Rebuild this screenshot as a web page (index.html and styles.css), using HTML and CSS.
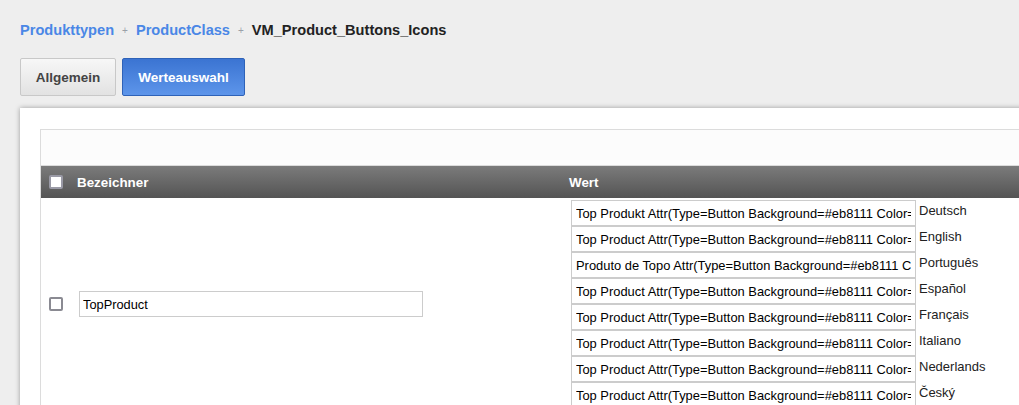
FILE: index.html
```html
<!DOCTYPE html>
<html>
<head>
<meta charset="utf-8">
<link rel="stylesheet" href="styles.css">
</head>
<body>
<div class="page">
  <nav class="crumbs">
    <a class="crumb-link">Produkttypen</a>
    <span class="sep">+</span>
    <a class="crumb-link">ProductClass</a>
    <span class="sep">+</span>
    <span class="crumb-current">VM_Product_Buttons_Icons</span>
  </nav>
  <div class="tabs">
    <button class="tab">Allgemein</button>
    <button class="tab tab-active">Werteauswahl</button>
  </div>
  <div class="panel">
    <div class="grid-box">
      <div class="toolbar"></div>
      <div class="head">
        <div class="hcell hcell-name"><span class="cb cb-head"></span><span>Bezeichner</span></div>
        <div class="hcell hcell-value">Wert</div>
      </div>
      <div class="row">
        <div class="cell-name"><span class="cb"></span><input class="name-input" type="text" value="TopProduct"></div>
        <div class="cell-value">
          <div class="lang-row"><input class="val-input" type="text" value="Top Produkt Attr(Type=Button Background=#eb8111 Color=#ffffff)"><span class="lang">Deutsch</span></div>
          <div class="lang-row"><input class="val-input" type="text" value="Top Product Attr(Type=Button Background=#eb8111 Color=#ffffff)"><span class="lang">English</span></div>
          <div class="lang-row"><input class="val-input" type="text" value="Produto de Topo Attr(Type=Button Background=#eb8111 Color=#ffffff)"><span class="lang">Português</span></div>
          <div class="lang-row"><input class="val-input" type="text" value="Top Product Attr(Type=Button Background=#eb8111 Color=#ffffff)"><span class="lang">Español</span></div>
          <div class="lang-row"><input class="val-input" type="text" value="Top Product Attr(Type=Button Background=#eb8111 Color=#ffffff)"><span class="lang">Français</span></div>
          <div class="lang-row"><input class="val-input" type="text" value="Top Product Attr(Type=Button Background=#eb8111 Color=#ffffff)"><span class="lang">Italiano</span></div>
          <div class="lang-row"><input class="val-input" type="text" value="Top Product Attr(Type=Button Background=#eb8111 Color=#ffffff)"><span class="lang">Nederlands</span></div>
          <div class="lang-row"><input class="val-input" type="text" value="Top Product Attr(Type=Button Background=#eb8111 Color=#ffffff)"><span class="lang">Český</span></div>
        </div>
      </div>
    </div>
  </div>
</div>
</body>
</html>
```

FILE: styles.css
```css
html, body {
  margin: 0;
  padding: 0;
  overflow: hidden;
  background: #eeeeee;
  font-family: "Liberation Sans", Arial, sans-serif;
}
.page {
  padding: 20px 0 0 20px;
  width: 1100px;
}
.crumbs {
  display: flex;
  align-items: center;
  height: 20px;
  font-size: 14.6px;
  font-weight: bold;
}
.crumb-link {
  color: #4a87e6;
}
.crumb-current {
  color: #222;
}
.sep {
  color: #9aa0a8;
  font-size: 10px;
  font-weight: normal;
  margin: 0 8px;
}
.tabs {
  display: flex;
  gap: 6px;
  margin-top: 18px;
}
.tab {
  height: 38px;
  padding: 0;
  width: 96px;
  border: 1px solid #c8c8c8;
  border-radius: 2px;
  background: linear-gradient(#f7f7f7, #e2e2e2);
  color: #444;
  font-family: "Liberation Sans", Arial, sans-serif;
  font-size: 13.5px;
  font-weight: bold;
}
.tab-active {
  width: 123px;
  border-color: #2e62b8;
  background: linear-gradient(#3b74d2, #5d95ea);
  color: #fff;
}
.panel {
  margin-top: 12px;
  background: #fff;
  box-shadow: 0 0 5px rgba(0,0,0,0.35);
  padding: 21px 0 0 20px;
  height: 400px;
}
.grid-box {
  border: 1px solid #dcdcdc;
  border-right: none;
  height: 400px;
}
.toolbar {
  height: 35px;
  background: #fcfcfc;
  border-bottom: 1px solid #dcdcdc;
}
.head {
  display: flex;
  height: 32px;
  background: linear-gradient(#7b7b7b, #545454);
  color: #fff;
  font-size: 13.4px;
  font-weight: bold;
}
.hcell {
  display: flex;
  align-items: center;
}
.hcell-name {
  width: 520px;
  padding-left: 8px;
}
.cb {
  display: inline-block;
  width: 10px;
  height: 10px;
  border: 2px solid #8a8a92;
  border-radius: 2px;
  background: #fff;
  flex: none;
}
.cb-head {
  border-color: #9a9aa6;
  margin-right: 14px;
}
.row {
  display: flex;
  padding-top: 2px;
}
.cell-name {
  width: 520px;
  padding-left: 8px;
  display: flex;
  align-items: center;
}
.cell-name .cb {
  margin-right: 16px;
}
.name-input {
  width: 344px;
  height: 26px;
  box-sizing: border-box;
  border: 1px solid #cccccc;
  padding: 0 3px;
  font-family: "Liberation Sans", Arial, sans-serif;
  font-size: 12.8px;
  color: #000;
  margin: 0;
  outline: none;
}
.cell-value {
  padding-left: 2px;
  display: flex;
  flex-direction: column;
}
.lang-row {
  display: flex;
  align-items: flex-start;
  height: 26px;
}
.val-input {
  width: 345px;
  height: 26px;
  box-sizing: border-box;
  border: 1px solid #cccccc;
  padding: 0 4px;
  font-family: "Liberation Sans", Arial, sans-serif;
  font-size: 12.9px;
  color: #000;
  margin: 0;
  outline: none;
}
.lang {
  margin-left: 3px;
  font-size: 13px;
  color: #222;
  line-height: 22px;
}
```
